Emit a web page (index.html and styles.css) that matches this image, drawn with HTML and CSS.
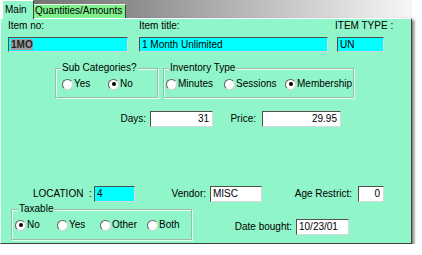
FILE: index.html
```html
<!DOCTYPE html>
<html>
<head>
    <link rel="stylesheet" href="styles.css">
</head>
<body>
    <div class="window">
        <div class="tabs">
            <div class="tab active">Main</div>
            <div class="tab">Quantities/Amounts</div>
        </div>

        <div class="panel">
            <div class="row head">
                <div class="field f-no">
                    <div class="lbl">Item no:</div>
                    <div class="box cyan"><span class="sel">1MO</span></div>
                </div>
                <div class="field f-title">
                    <div class="lbl">Item title:</div>
                    <div class="box cyan">1 Month Unlimited</div>
                </div>
                <div class="field f-type">
                    <div class="lbl">ITEM TYPE :</div>
                    <div class="box cyan">UN</div>
                </div>
            </div>

            <div class="row groups">
                <fieldset class="group sub">
                    <legend>Sub Categories?</legend>
                    <div class="opts">
                        <span class="radio"><span class="dot"></span>Yes</span>
                        <span class="radio"><span class="dot on"></span>No</span>
                    </div>
                </fieldset>
                <fieldset class="group inv">
                    <legend>Inventory Type</legend>
                    <div class="opts">
                        <span class="radio"><span class="dot"></span>Minutes</span>
                        <span class="radio"><span class="dot"></span>Sessions</span>
                        <span class="radio"><span class="dot on"></span>Membership</span>
                    </div>
                </fieldset>
            </div>

            <div class="row line days-row">
                <span class="lbl l-days">Days:</span>
                <span class="box right w-days">31</span>
                <span class="lbl l-price">Price:</span>
                <span class="box right w-price">29.95</span>
            </div>

            <div class="row line loc-row">
                <span class="lbl l-loc">LOCATION  :</span>
                <span class="box cyan w-loc">4</span>
                <span class="lbl l-vendor">Vendor:</span>
                <span class="box w-vendor">MISC</span>
                <span class="lbl l-age">Age Restrict:</span>
                <span class="box right w-age">0</span>
            </div>

            <div class="row bottom">
                <fieldset class="group tax">
                    <legend>Taxable</legend>
                    <div class="opts">
                        <span class="radio"><span class="dot on"></span>No</span>
                        <span class="radio"><span class="dot"></span>Yes</span>
                        <span class="radio"><span class="dot"></span>Other</span>
                        <span class="radio"><span class="dot"></span>Both</span>
                    </div>
                </fieldset>
                <div class="line date">
                    <span class="lbl l-date">Date bought:</span>
                    <span class="box w-date">10/23/01</span>
                </div>
            </div>
        </div>
    </div>
</body>
</html>
```

FILE: styles.css
```css
body {
    margin: 0;
    padding: 0;
    background-color: #fff;
}

.window {
    width: 412px;
    font-family: "Liberation Sans", Arial, sans-serif;
    font-size: 10px;
    line-height: 12px;
    color: #000;
}

/* tab strip */
.tabs {
    display: flex;
    align-items: flex-end;
    height: 18px;
    padding-left: 2px;
    background: linear-gradient(90deg, #fff 0, #fff 2px, #6c6c6c 2px, #8c8c8c 130px, #cdcdcd 300px, #f6f6f6 412px);
}

.tab {
    box-sizing: border-box;
    height: 14px;
    width: 92px;
    padding-left: 1px;
    background-color: #7ef08c;
    border-top: 1px solid #f0fff0;
    border-right: 1px solid #404040;
}

.tab.active {
    position: relative;
    height: 19px;
    width: 32px;
    margin-bottom: -1px;
    padding: 3px 0 0 2px;
    background-color: #90f5c8;
    border-left: 1px solid #fff;
    border-top: 1px solid #fff;
}

/* page */
.panel {
    box-sizing: border-box;
    height: 226px;
    background-color: #90f5c8;
    border-top: 1px solid #fff;
    border-left: 1px solid #e8fff4;
    border-right: 1px solid #404040;
    border-bottom: 1px solid #404040;
    box-shadow: 2px 2px 3px rgba(0, 0, 0, 0.55);
}

.row {
    display: flex;
}

.box {
    display: block;
    box-sizing: border-box;
    height: 16px;
    padding: 0 2px;
    line-height: 14px;
    background-color: #fff;
    border: 1px solid;
    border-color: #505050 #d8d8d8 #d8d8d8 #505050;
    white-space: nowrap;
    overflow: hidden;
}

.box.cyan {
    background-color: #00ffff;
}

.box.right {
    text-align: right;
    padding-right: 3px;
}

.sel {
    font-weight: bold;
    color: #222;
    background-color: #a0a0a0;
}

/* item header */
.head {
    margin-top: 1px;
    padding-left: 7px;
}

.head .lbl {
    margin-bottom: 5px;
}

.head .box {
    height: 15px;
    line-height: 13px;
}

.f-no { width: 120px; }
.f-title { width: 189px; margin-left: 11px; }
.f-type { width: 47px; margin-left: 9px; }
.f-type .lbl { margin-left: -2px; white-space: nowrap; }

/* group boxes */
.group {
    box-sizing: border-box;
    margin: 0;
    padding: 3px 0 6px 6px;
    border: 1px solid #a3b8ad;
    box-shadow: inset 1px 1px 0 #e4fff2, 1px 1px 0 #e4fff2;
}

.group legend {
    padding: 0 1px;
    margin-left: -1px;
    background-color: #90f5c8;
}

.opts {
    display: grid;
    align-items: center;
    height: 14px;
}

.radio {
    display: flex;
    align-items: center;
    white-space: nowrap;
}

.dot {
    position: relative;
    box-sizing: border-box;
    width: 11px;
    height: 11px;
    margin-right: 1px;
    border-radius: 50%;
    background-color: #fff;
    border: 1px solid;
    border-color: #606060 #d4d4d4 #d4d4d4 #606060;
}

.dot.on::after {
    content: "";
    position: absolute;
    left: 2.5px;
    top: 2.5px;
    width: 4px;
    height: 4px;
    border-radius: 50%;
    background-color: #000;
}

.groups {
    margin-top: 10px;
    padding-left: 54px;
}

.sub { width: 103px; }
.sub .opts { grid-template-columns: 46px auto; }

.inv { width: 191px; margin-left: 5px; padding-left: 2px; }
.inv legend { margin-left: 3px; }
.inv .opts { grid-template-columns: 58px 61px auto; }

/* single line rows */
.line {
    display: flex;
    align-items: center;
}

.line .lbl {
    white-space: pre;
}

.days-row { margin-top: 13px; }
.l-days { margin-left: 110px; width: 35px; text-align: right; margin-right: 4px; }
.w-days { width: 63px; }
.l-price { margin-left: 13px; width: 30px; text-align: right; margin-right: 6px; }
.w-price { width: 79px; }

.loc-row { margin-top: 59px; }
.l-loc { margin-left: 32px; width: 59px; margin-right: 2px; }
.w-loc { width: 41px; }
.l-vendor { margin-left: 30px; width: 41px; text-align: right; margin-right: 4px; }
.w-vendor { width: 52px; }
.l-age { margin-left: 28px; width: 62px; text-align: right; margin-right: 6px; }
.w-age { width: 26px; }

/* taxable + date */
.bottom {
    margin-top: 1px;
    align-items: flex-start;
    padding-left: 10px;
}

.tax { width: 181px; padding: 3px 0 7px 3px; }
.tax legend { margin-left: 3px; }
.tax .opts { grid-template-columns: 42px 43px 47px auto; }

.date { margin-top: 16px; }
.l-date { margin-left: 40px; width: 60px; text-align: right; margin-right: 4px; }
.w-date { width: 53px; }
```
